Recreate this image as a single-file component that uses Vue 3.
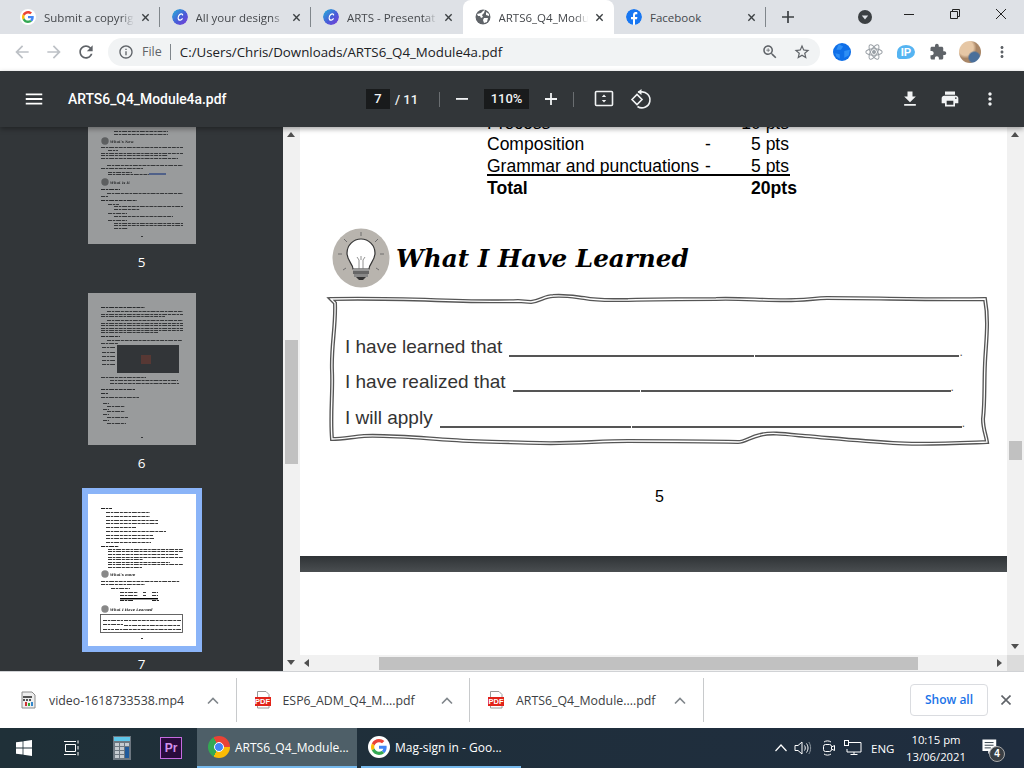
<script setup>
const tabs = [
  { title: 'Submit a copyrig', icon: 'g' },
  { title: 'All your designs', icon: 'c' },
  { title: 'ARTS - Presentat', icon: 'c' },
  { title: 'ARTS6_Q4_Modu', icon: 'globe', active: true },
  { title: 'Facebook', icon: 'f' }
]

const downloads = [
  { name: 'video-1618733538.mp4', video: true },
  { name: 'ESP6_ADM_Q4_M....pdf' },
  { name: 'ARTS6_Q4_Module....pdf' }
]

const scores = [
  { label: 'Process', dash: '-', pts: '10 pts' },
  { label: 'Composition', dash: '-', pts: '5 pts' },
  { label: 'Grammar and punctuations', dash: '-', pts: '5 pts' }
]

const sentences = [
  { text: 'I have learned that', a: 245, b: 204 },
  { text: 'I have realized that', a: 127, b: 310 },
  { text: 'I will apply', a: 191, b: 330 }
]

// thumbnail text lines: x, y, width, height
const bars = (list) => list.map(([x, y, w, h]) => ({ x, y: y + 0.5, w, h: h || 0.9 }))

const thumbs = [
  {
    n: 5,
    lines: bars([[26, 39, 54], [26, 42, 54], [13, 55, 82], [20, 58, 10], [13, 61, 82], [13, 63, 67], [13, 66, 77],
      [19, 73, 76], [13, 76, 42], [20, 80, 24], [20, 82, 41], [13, 97, 19, 1.2], [19, 101, 76], [13, 104, 7],
      [13, 108, 36, 1.2], [20, 112, 11], [26, 114, 69], [26, 117, 26], [20, 121, 19], [26, 124, 59], [20, 128, 19],
      [26, 131, 69], [26, 133, 69], [26, 136, 14], [53, 144, 2]]),
    links: [[61, 82, 17]],
    heads: [{ y: 49, text: "What's New" }, { y: 90, text: 'What is It' }]
  },
  {
    n: 6,
    lines: bars([[13, 14, 44, 1.2], [19, 18, 76], [13, 21, 82], [13, 23, 64], [19, 27, 76], [13, 30, 82], [13, 32, 82],
      [13, 35, 82], [13, 37, 82], [13, 39, 57], [13, 43, 19, 1.2], [19, 47, 75], [13, 50, 17], [14, 54, 13], [14, 59, 13],
      [14, 63, 13], [14, 67, 13], [14, 71, 13], [13, 84, 45], [22, 87, 68], [22, 90, 69], [13, 96, 34, 1.2],
      [13, 100, 7, 1.2], [13, 104, 38], [15, 110, 6], [19, 113, 18], [15, 116, 6], [19, 118, 18], [15, 121, 6],
      [19, 124, 21], [15, 127, 6], [19, 130, 19], [53, 144, 2]]),
    picture: true,
    heads: []
  },
  {
    n: 7,
    selected: true,
    lines: bars([[13, 14, 11, 1.2], [18, 18, 44], [18, 22, 44], [18, 26, 52], [18, 29, 52], [18, 33, 30], [18, 37, 60],
      [18, 41, 47], [18, 44, 48], [18, 48, 45], [13, 52, 18, 1.2], [20, 55, 75], [20, 57, 75], [20, 60, 70], [20, 63, 75],
      [20, 65, 35], [20, 68, 62], [20, 70, 75], [20, 73, 34], [13, 87, 79], [13, 90, 44], [23, 94, 19], [32, 98, 18],
      [55, 98, 3], [64, 98, 6], [32, 101, 18], [55, 101, 3], [64, 101, 6], [32, 104, 18],
      [32, 106, 13, 1.2], [64, 106, 7, 1.2], [15, 126, 20], [36, 126, 57], [15, 130, 20], [36, 131, 56], [15, 135, 11],
      [27, 135, 66], [53, 144, 2]]),
    rule: true,
    heads: [{ y: 80, text: "What's more" }, { y: 115, text: 'What I Have Learned' }],
    box: true
  }
]

const framePath = 'M331 298 C400 296 470 302 518 300 L531 301 C540 300 545 295 553 295 C565 294 575 296 584 297 C600 300 610 299 628 299 C660 298 690 298 716 298 C740 297 770 300 796 299 C810 299 815 297 827 297 C880 297 930 299 985 298 C989 320 986 340 985 362 C984 385 985 400 983 418 C983 428 986 434 987 441 C960 442 920 444 893 442 C860 440 830 437 805 435 C785 433 770 431 760 434 C750 436 745 441 738 441 C700 440 665 440 628 440 C600 440 570 443 540 442 C510 441 480 441 452 439 C420 437 390 434 364 435 C352 436 342 438 332 438 C330 415 333 390 332 370 C331 345 336 325 335 302 Z'
</script>

<template>
<div class="screen">
  <svg class="defs" width="0" height="0">
    <symbol id="g-logo" viewBox="0 0 48 48">
      <path fill="#EA4335" d="M24 9.5c3.54 0 6.71 1.22 9.21 3.6l6.85-6.85C35.9 2.38 30.47 0 24 0 14.62 0 6.51 5.38 2.56 13.22l7.98 6.19C12.43 13.72 17.74 9.5 24 9.5z"/>
      <path fill="#4285F4" d="M46.98 24.55c0-1.57-.15-3.09-.38-4.55H24v9.02h12.94c-.58 2.96-2.26 5.48-4.78 7.18l7.73 6c4.51-4.18 7.09-10.36 7.09-17.65z"/>
      <path fill="#FBBC05" d="M10.53 28.59c-.48-1.45-.76-2.99-.76-4.59s.27-3.14.76-4.59l-7.98-6.19C.92 16.46 0 20.12 0 24c0 3.88.92 7.54 2.56 10.78l7.97-6.19z"/>
      <path fill="#34A853" d="M24 48c6.48 0 11.93-2.13 15.89-5.81l-7.73-6c-2.15 1.45-4.92 2.3-8.16 2.3-6.26 0-11.57-4.22-13.47-9.91l-7.98 6.19C6.51 42.62 14.62 48 24 48z"/>
    </symbol>
    <symbol id="pdf-file" viewBox="0 0 18 18">
      <path d="M3.5 .5H12L15 3.5V17H3.5Z" fill="#fff" stroke="#9a9a9a"/>
    </symbol>
  </svg>

  <!-- tab strip -->
  <div class="tabstrip">
    <div v-for="(t, i) in tabs" :key="i" class="tab" :class="{ active: t.active, nosep: t.active || tabs[i + 1]?.active }">
      <span v-if="t.icon === 'g'" class="fav g-wrap"><svg width="12" height="12"><use href="#g-logo"/></svg></span>
      <svg v-else-if="t.icon === 'c'" class="fav" viewBox="0 0 16 16">
        <defs><linearGradient id="canva-grad" x1="0" y1="0" x2="1" y2="1"><stop offset="0" stop-color="#23b4d8"/><stop offset=".55" stop-color="#4a5bd8"/><stop offset="1" stop-color="#7c3cd6"/></linearGradient></defs>
        <circle cx="8" cy="8" r="8" fill="url(#canva-grad)"/>
        <path d="M10.600 5.800C10.300 4.600 8.900 4.500 7.800 5.500 6.300 6.900 5.800 9.300 6.600 10.500 7.400 11.600 9 11.200 10.200 9.800" fill="none" stroke="#fff" stroke-width="1.300" stroke-linecap="round"/>
      </svg>
      <svg v-else-if="t.icon === 'globe'" class="fav" viewBox="0 0 16 16"><circle cx="8" cy="8" r="7.5" fill="#5f6368"/><path d="M2 5 L6 4 L8 2 L10 1 L9 4 L7 6 L8 8 L6 9 L5 7 L3 7Z M9 9 L13 9 L12 13 L9 14 L8 11Z M11 3 L14 5 L14 7 L11 6Z" fill="#fff"/></svg>
      <svg v-else class="fav" viewBox="0 0 16 16"><circle cx="8" cy="8" r="8" fill="#1877f2"/><path d="M11 10.3l.4-2.3H9V6.5c0-.7.3-1.2 1.3-1.2h1V3.3s-.9-.2-1.8-.2C8.300 3.100 7 4.200 7 6.200V8H5v2.300h2V16h2v-5.700z" fill="#fff"/></svg>
      <span class="tab-title" :class="{ short: t.icon === 'f' }">{{ t.title }}</span>
      <svg class="tab-close" viewBox="0 0 10 10"><path d="M1.500 1.500l7 7M8.500 1.500l-7 7" stroke="#3c4043" stroke-width="1.500"/></svg>
    </div>
    <svg class="newtab" viewBox="0 0 12 12"><path d="M6 0v12M0 6h12" stroke="#3c4043" stroke-width="1.700"/></svg>
    <svg class="profile-drop" viewBox="0 0 16 16"><circle cx="8" cy="8" r="7" fill="#3c4043"/><path d="M4.800 6.500h6.400L8 10.500z" fill="#dee1e6"/></svg>
    <div class="winbtns">
      <svg viewBox="0 0 10 10"><path d="M0 5.500h10" stroke="#222" stroke-width="1"/></svg>
      <svg viewBox="0 0 10 10" fill="none" stroke="#222"><path d="M.5 2.500h7v7h-7zM2.500 2.500v-2h7v7h-2"/></svg>
      <svg viewBox="0 0 10 10"><path d="M0 0l10 10M10 0L0 10" stroke="#222" stroke-width="1"/></svg>
    </div>
  </div>

  <!-- address bar -->
  <div class="toolbar">
    <svg class="navbtn" viewBox="0 0 24 24"><path fill="#bdc1c6" d="M20 11H7.830l5.590-5.590L12 4l-8 8 8 8 1.410-1.410L7.830 13H20v-2z"/></svg>
    <svg class="navbtn" viewBox="0 0 24 24"><path fill="#bdc1c6" d="M12 4l-1.410 1.410L16.170 11H4v2h12.170l-5.580 5.590L12 20l8-8z"/></svg>
    <svg class="navbtn" viewBox="0 0 24 24"><path fill="#5f6368" d="M17.650 6.350C16.200 4.900 14.210 4 12 4c-4.420 0-7.990 3.580-7.990 8s3.570 8 7.990 8c3.730 0 6.840-2.550 7.730-6h-2.080c-.82 2.330-3.040 4-5.650 4-3.310 0-6-2.690-6-6s2.690-6 6-6c1.660 0 3.140.69 4.220 1.780L13 11h7V4l-2.350 2.350z"/></svg>
    <div class="omnibox">
      <svg class="info" viewBox="0 0 24 24"><path fill="#5f6368" d="M11 7h2v2h-2zm0 4h2v6h-2zm1-9C6.480 2 2 6.480 2 12s4.480 10 10 10 10-4.480 10-10S17.520 2 12 2zm0 18c-4.410 0-8-3.590-8-8s3.590-8 8-8 8 3.590 8 8-3.590 8-8 8z"/></svg>
      <span class="scheme">File</span>
      <span class="url">C:/Users/Chris/Downloads/ARTS6_Q4_Module4a.pdf</span>
      <svg class="omni-ic zoom-ic" viewBox="0 0 24 24"><path fill="#5f6368" d="M15.500 14h-.79l-.28-.27C15.410 12.590 16 11.110 16 9.500 16 5.910 13.090 3 9.500 3S3 5.910 3 9.500 5.910 16 9.500 16c1.610 0 3.090-.59 4.230-1.570l.27.28v.79l5 4.990L20.490 19l-4.990-5zm-6 0C7.010 14 5 11.990 5 9.500S7.010 5 9.500 5 14 7.010 14 9.500 11.990 14 9.500 14z"/><path fill="#5f6368" d="M12 10h-2v2H9v-2H7V9h2V7h1v2h2v1z"/></svg>
      <svg class="omni-ic" viewBox="0 0 24 24"><path fill="#5f6368" d="M22 9.240l-7.190-.62L12 2 9.190 8.630 2 9.240l5.460 4.730L5.820 21 12 17.270 18.180 21l-1.630-7.030L22 9.240zM12 15.400l-3.760 2.270 1-4.280-3.320-2.880 4.380-.38L12 6.100l1.710 4.040 4.380.38-3.320 2.880 1 4.280L12 15.400z"/></svg>
    </div>
    <div class="exts">
      <svg viewBox="0 0 16 16"><circle cx="8" cy="8" r="8" fill="#0f6fe8"/><path d="M5 1 L9 3 L7 6 L3 6Z M10 7 L15 6 L14 11 L10 13Z M2 9 L6 10 L6 14 L3 12Z" fill="#2f8ff5"/></svg>
      <svg viewBox="0 0 16 16" fill="none" stroke="#9aa0a6" stroke-width=".9"><ellipse cx="8" cy="8" rx="7.300" ry="2.900"/><ellipse cx="8" cy="8" rx="7.300" ry="2.900" transform="rotate(60 8 8)"/><ellipse cx="8" cy="8" rx="7.300" ry="2.900" transform="rotate(120 8 8)"/><circle cx="8" cy="8" r="1.300" fill="#9aa0a6"/></svg>
      <span class="ip-ext">IP</span>
      <svg viewBox="0 0 24 24"><path fill="#5f6368" d="M20.500 11H19V7c0-1.100-.9-2-2-2h-4V3.500C13 2.120 11.880 1 10.500 1S8 2.120 8 3.500V5H4c-1.100 0-1.990.9-1.990 2v3.800H3.500c1.490 0 2.700 1.210 2.700 2.700s-1.210 2.700-2.700 2.700H2V20c0 1.100.9 2 2 2h3.800v-1.500c0-1.490 1.210-2.700 2.700-2.700 1.490 0 2.700 1.210 2.700 2.700V22H17c1.100 0 2-.9 2-2v-4h1.500c1.380 0 2.500-1.120 2.500-2.500S21.880 11 20.500 11z"/></svg>
      <span class="avatar"></span>
      <svg viewBox="0 0 24 24"><path fill="#5f6368" d="M12 8c1.100 0 2-.9 2-2s-.9-2-2-2-2 .9-2 2 .9 2 2 2zm0 2c-1.100 0-2 .9-2 2s.9 2 2 2 2-.9 2-2-.9-2-2-2zm0 6c-1.100 0-2 .9-2 2s.9 2 2 2 2-.9 2-2-.9-2-2-2z"/></svg>
    </div>
  </div>

  <!-- pdf viewer toolbar -->
  <div class="pdfbar">
    <div class="pdf-left">
      <svg class="pdf-ic" viewBox="0 0 24 24"><path fill="#fff" d="M3 18h18v-2H3v2zm0-5h18v-2H3v2zm0-7v2h18V6H3z"/></svg>
      <span class="pdf-title">ARTS6_Q4_Module4a.pdf</span>
    </div>
    <span class="pagebox">7</span>
    <span class="pagecount">/ 11</span>
    <span class="pdf-sep"></span>
    <svg class="pdf-ic zoom-btn" viewBox="0 0 24 24"><path fill="#f1f3f4" d="M6 11h12v1.800H6z"/></svg>
    <span class="zoombox">110%</span>
    <svg class="pdf-ic zoom-btn" viewBox="0 0 24 24"><path fill="#f1f3f4" d="M11.100 6h1.800v5.100H18v1.800h-5.100V18h-1.800v-5.100H6v-1.800h5.100z"/></svg>
    <span class="pdf-sep sep2"></span>
    <svg class="pdf-ic fit" viewBox="0 0 24 24" fill="none"><rect x="3.500" y="4.500" width="17" height="14" rx="1" stroke="#f1f3f4" stroke-width="1.600"/><path d="M12 7.500l2.200 2.500H9.800zM12 15.500l2.200-2.500H9.800z" fill="#f1f3f4"/></svg>
    <svg class="pdf-ic rot" viewBox="0 0 24 24" fill="none"><path d="M4 12.500l5-5 5 5-5 5z" stroke="#f1f3f4" stroke-width="1.600"/><path d="M10 5h2.500a8 8 0 1 1-3 14.500" stroke="#f1f3f4" stroke-width="1.600"/><path d="M13.500 2v6l-4-3z" fill="#f1f3f4"/></svg>
    <svg class="pdf-ic right-ic dl" viewBox="0 0 24 24"><path fill="#f1f3f4" d="M19 9h-4V3H9v6H5l7 7 7-7zM5 18v2h14v-2H5z"/></svg>
    <svg class="pdf-ic right-ic print" viewBox="0 0 24 24"><path fill="#f1f3f4" d="M19 8H5c-1.660 0-3 1.340-3 3v6h4v4h12v-4h4v-6c0-1.660-1.340-3-3-3zm-3 11H8v-5h8v5zm3-7c-.55 0-1-.45-1-1s.45-1 1-1 1 .45 1 1-.45 1-1 1zm-1-9H6v4h12V3z"/></svg>
    <svg class="pdf-ic right-ic print" viewBox="0 0 24 24"><path fill="#f1f3f4" d="M12 8c1.100 0 2-.9 2-2s-.9-2-2-2-2 .9-2 2 .9 2 2 2zm0 2c-1.100 0-2 .9-2 2s.9 2 2 2 2-.9 2-2-.9-2-2-2zm0 6c-1.100 0-2 .9-2 2s.9 2 2 2 2-.9 2-2-.9-2-2-2z"/></svg>
  </div>

  <div class="main">
    <!-- thumbnails -->
    <div class="sidebar">
      <div class="thumbs">
        <div v-for="p in thumbs" :key="p.n" class="thumb" :class="{ selected: p.selected }">
          <div class="thumb-page">
            <svg class="thumb-ink" viewBox="0 0 108 152">
              <line v-for="(l, i) in p.lines" :key="i" :x1="l.x" :y1="l.y" :x2="l.x + l.w" :y2="l.y" :stroke-width="l.h" stroke="#222" stroke-dasharray="4 .8 2.500 .8 5 .8 3 .8"/>
              <line v-for="(l, i) in p.links || []" :key="i" :x1="l[0]" :y1="l[1]" :x2="l[0] + l[2]" :y2="l[1]" stroke-width="1.200" stroke="#0f3fc0"/>
              <g v-for="h in p.heads" :key="h.y">
                <circle cx="17" :cy="h.y" r="3.700" fill="#888"/>
                <text x="22" :y="h.y + 1.500" class="thumb-head">{{ h.text }}</text>
              </g>
              <g v-if="p.picture">
                <rect x="29" y="52" width="62" height="28" fill="#333538"/>
                <rect x="53" y="62" width="10" height="9" fill="#7c3a30"/>
              </g>
              <rect v-if="p.rule" x="32" y="104" width="38" height="1.400" fill="#000"/>
              <rect v-if="p.box" x="12.500" y="120.500" width="82" height="18" fill="none" stroke="#555" stroke-width=".9"/>
            </svg>
          </div>
          <div class="thumb-num">{{ p.n }}</div>
        </div>
      </div>
    </div>
    <div class="vscroll">
      <span class="arrow up"></span>
      <div class="track"><div class="bar side-bar"></div></div>
      <span class="arrow down"></span>
    </div>

    <!-- page view -->
    <div class="viewer">
      <div class="view-row">
        <div class="doc">
          <div class="page">
            <div class="scores">
              <template v-for="s in scores" :key="s.label">
                <span>{{ s.label }}</span><span>{{ s.dash }}</span><span class="pts">{{ s.pts }}</span>
              </template>
              <div class="rule"></div>
              <b>Total</b><b></b><b>20pts</b>
            </div>
            <div class="learned">
              <svg class="bulb" viewBox="0 0 58 60">
                <ellipse cx="29" cy="30" rx="28.500" ry="29.500" fill="#b8b4ae"/>
                <path d="M21 41c0-5-6-8-6-16a14 14 0 0 1 28 0c0 8-6 11-6 16z" fill="#fff" stroke="#333" stroke-width="1.200"/>
                <path d="M27 41v-9l-2-3M31 41v-9l2-3M29 32v-4" fill="none" stroke="#777" stroke-width=".8"/>
                <path d="M21 41h16v2H21z" fill="#999"/><path d="M21 43h16v3H21z" fill="#666"/><path d="M22 46h14v3H22z" fill="#888"/><path d="M24 49h10l-3 3h-4z" fill="#333"/>
                <path d="M29 4v4M12 11l3 3M46 11l-3 3M6 26h4M48 26h4M11 42l3-2M47 42l-3-2" stroke="#666" stroke-width=".9"/>
              </svg>
              <span class="learned-title">What I Have Learned</span>
            </div>
            <div class="frame">
              <svg class="frame-line" viewBox="325 290 667 156" fill="none">
                <path :d="framePath" stroke="#555" stroke-width="4"/>
                <path :d="framePath" stroke="#fff" stroke-width="1.300"/>
              </svg>
              <div v-for="s in sentences" :key="s.text" class="sentence">
                <span>{{ s.text }}</span>
                <i class="blank" :style="{ width: s.a + 'px' }"></i>
                <i class="blank" :style="{ width: s.b + 'px' }"></i>
                <span class="dot">.</span>
              </div>
            </div>
            <div class="pageno">5</div>
          </div>
          <div class="pagegap"></div>
        </div>
        <div class="vscroll right">
          <span class="arrow up"></span>
          <div class="track"><div class="bar main-bar"></div></div>
          <span class="arrow down"></span>
        </div>
      </div>
      <div class="hscroll">
        <span class="arrow left"></span>
        <div class="htrack"><div class="hbar"></div></div>
        <span class="arrow right-a"></span>
        <span class="corner"></span>
      </div>
    </div>
  </div>

  <!-- downloads shelf -->
  <div class="shelf">
    <div v-for="d in downloads" :key="d.name" class="dl-item">
      <svg v-if="d.video" class="dl-icon" viewBox="0 0 18 18">
        <path d="M2 1H12L15 4V17H2Z" fill="#eee" stroke="#8a8a8a"/>
        <path d="M3 5h9v2H3zM3 8h2v2H3zM6 8h2v2H6zM9 8h2v2H9z" fill="#555"/>
        <path d="M5 11h2v4H5z" fill="#c33"/><path d="M8 12h2v3H8z" fill="#3a3"/><path d="M11 11h2v4h-2z" fill="#38c"/>
      </svg>
      <span v-else class="pdf-badge">
        <svg class="dl-doc" viewBox="0 0 18 18"><use href="#pdf-file"/></svg>
        <span class="pdf-label">PDF</span>
      </span>
      <span class="dl-name">{{ d.name }}</span>
      <svg class="dl-chev" viewBox="0 0 12 8"><path d="M1 6.500l5-5 5 5" fill="none" stroke="#80868b" stroke-width="1.600"/></svg>
    </div>
    <button class="showall">Show all</button>
    <svg class="shelf-x" viewBox="0 0 10 10"><path d="M.5.5l9 9M9.500.5l-9 9" stroke="#5f6368" stroke-width="1.600"/></svg>
  </div>

  <!-- windows taskbar -->
  <div class="taskbar">
    <svg class="tb-win" viewBox="0 0 16 16"><path fill="#fff" d="M0 2.300L6.600 1.400V7.500H0zM7.400 1.300L16 0V7.500H7.400zM0 8.400H6.600V14.600L0 13.700zM7.400 8.400H16V16L7.400 14.700z"/></svg>
    <svg class="tb-view" viewBox="0 0 18 16" fill="none" stroke="#fff"><path d="M2.500 4.500h10v7h-10zM1 1.500h12M1 14.500h12M15 .5v3M15 6v3.500M15 12v3.500" stroke-width="1"/></svg>
    <svg class="tb-calc" viewBox="0 0 18 24"><rect width="18" height="24" fill="#6d7780"/><rect x="1" y="1" width="16" height="4" fill="#5ec7ea"/>
      <path d="M2 7h4v3H2zM7 7h4v3H7zM12 7h4v3h-4zM2 11h4v3H2zM7 11h4v3H7zM2 15h4v3H2zM7 15h4v3H7zM2 19h4v3H2zM7 19h4v3H7z" fill="#c5cbd0"/><path d="M12 11h4v11h-4z" fill="#1f5a9c"/></svg>
    <span class="tb-pr">Pr</span>
    <div class="tb-app current"><span class="chrome"></span><span class="tb-label">ARTS6_Q4_Module...</span></div>
    <div class="tb-app google"><span class="tb-g"><svg width="16" height="16"><use href="#g-logo"/></svg></span><span class="tb-label">Mag-sign in - Goo...</span></div>
    <div class="tray">
      <svg class="tr-chev" viewBox="0 0 12 8"><path d="M.5 7l5.500-6 5.500 6" fill="none" stroke="#fff" stroke-width="1.200"/></svg>
      <svg class="tr-ic speaker" viewBox="0 0 18 16" fill="none" stroke="#fff"><path d="M1 5.500h3L8 2v12L4 10.500H1z"/><path d="M10.500 5.500c1 1.500 1 3.500 0 5M12.500 3.500c2 3 2 6 0 9" /><path d="M14.800 2c2.400 3.500 2.400 8.500 0 12" stroke="#8a949c"/></svg>
      <svg class="tr-ic meet" viewBox="0 0 18 18" fill="none" stroke="#fff"><rect x="3.500" y="5.500" width="8" height="7" rx="2"/><path d="M11.500 8l3-1.500v5l-3-1.500M4 3c2-1.500 5-1.500 7 0M4 15c2 1.500 5 1.500 7 0"/></svg>
      <svg class="tr-ic net" viewBox="0 0 18 16" fill="none" stroke="#fff"><path d="M4.500 2.500h12.500v9.500H3V9M10 12v2.500M6.500 14.500h7"/><rect x=".5" y=".5" width="4" height="5" fill="#1f2d3a"/></svg>
      <span class="tr-lang">ENG</span>
      <div class="tr-clock"><span>10:15 pm</span><span>13/06/2021</span></div>
      <div class="tr-note">
        <svg viewBox="0 0 18 18"><path d="M.5.500h15.500v13H10l-3 3.500v-3.500H.5z" fill="#fff"/><path d="M3 4h10M3 7h10M3 10h7" stroke="#1f2d3a"/></svg>
        <span class="tr-badge">4</span>
      </div>
    </div>
  </div>
</div>
</template>

<style scoped>
.screen {
  display: flex;
  flex-direction: column;
  width: 1024px;
  height: 768px;
  overflow: hidden;
  background: #fff;
  font-family: "Open Sans", "Liberation Sans", sans-serif;
}

.defs {
  position: absolute;
}

/* tab strip */
.tabstrip {
  display: flex;
  align-items: center;
  height: 34px;
  flex: none;
  padding-left: 8px;
  background: #dee1e6;
}

.tab {
  position: relative;
  display: flex;
  align-items: center;
  width: 151.500px;
  height: 34px;
  padding: 0 8px 0 12px;
  box-sizing: border-box;
  color: #45484c;
  font-size: 11.500px;
}

.tab::after {
  content: "";
  position: absolute;
  right: 0;
  top: 7px;
  width: 1px;
  height: 20px;
  background: #80868b;
}

.tab.nosep::after {
  display: none;
}

.tab.active {
  background: #fff;
  border-radius: 8px 8px 0 0;
}

.fav {
  flex: none;
  width: 16px;
  height: 16px;
  border-radius: 50%;
}

.g-wrap {
  display: flex;
  align-items: center;
  justify-content: center;
  background: #fff;
}

.tab-title {
  flex: 1;
  margin: 0 7px 0 8px;
  overflow: hidden;
  white-space: nowrap;
  -webkit-mask-image: linear-gradient(90deg, #000 85%, transparent);
  mask-image: linear-gradient(90deg, #000 85%, transparent);
}

.tab-title.short {
  -webkit-mask-image: none;
  mask-image: none;
}

.tab-close {
  flex: none;
  width: 9px;
  height: 9px;
  margin-right: 2px;
}

.newtab {
  width: 12px;
  height: 12px;
  margin: 0 0 0 16.500px;
}

.profile-drop {
  width: 16px;
  height: 16px;
  margin-left: 63px;
}

.winbtns {
  display: flex;
  gap: 36px;
  margin: -6px 0 0 31px;
}

.winbtns svg {
  width: 10px;
  height: 10px;
}

/* address bar */
.toolbar {
  display: flex;
  align-items: center;
  flex: none;
  height: 37px;
  padding: 0 0 1px 12px;
  box-sizing: border-box;
  background: #fff;
}

.navbtn {
  width: 20px;
  height: 20px;
  margin-right: 12px;
}

.omnibox {
  display: flex;
  align-items: center;
  width: 712px;
  height: 28px;
  padding: 0 9px 0 10px;
  box-sizing: border-box;
  border-radius: 14px;
  background: #f1f3f4;
  font-size: 13.300px;
}

.info {
  width: 16px;
  height: 16px;
}

.scheme {
  margin-left: 8px;
  padding-right: 8px;
  border-right: 1px solid #80868b;
  color: #5f6368;
  font-size: 12.500px;
  line-height: 16px;
}

.url {
  margin-left: 9px;
  color: #202124;
  white-space: nowrap;
}

.omni-ic {
  width: 18px;
  height: 18px;
  margin-left: 14px;
}

.zoom-ic {
  margin-left: auto;
}

.exts {
  display: flex;
  align-items: center;
  margin-left: 13px;
  gap: 14px;
}

.exts svg,
.ip-ext {
  flex: none;
  width: 18px;
  height: 18px;
}

.ip-ext {
  display: flex;
  align-items: center;
  justify-content: center;
  border-radius: 50% 50% 50% 20%;
  height: 14px;
  color: #fff;
  background: #55b4f2;
  font: 700 11px "Liberation Sans", sans-serif;
}

.avatar {
  flex: none;
  width: 22px;
  height: 22px;
  margin: 0 -2px;
  border-radius: 50%;
  background:
    radial-gradient(circle at 70% 75%, #4a6f9a 0 22%, transparent 30%),
    radial-gradient(circle at 30% 30%, #e6c7a5 0 35%, transparent 50%),
    #a98666;
}

/* pdf toolbar */
.pdfbar {
  position: relative;
  z-index: 2;
  display: flex;
  align-items: center;
  flex: none;
  height: 56px;
  padding-right: 24px;
  background: #323639;
  box-shadow: 0 2px 5px rgba(0, 0, 0, .35);
  color: #f1f3f4;
  font-family: Roboto, sans-serif;
}

.pdf-left {
  display: flex;
  align-items: center;
  width: 366px;
  padding-left: 23px;
  box-sizing: border-box;
}

.pdf-ic {
  flex: none;
  width: 24px;
  height: 24px;
}

.pdf-left .pdf-ic {
  width: 22px;
  height: 22px;
}

.right-ic {
  width: 20px;
  height: 20px;
}

.pdf-title {
  margin-left: 23px;
  font-size: 13.900px;
  font-weight: 500;
  color: #fff;
}

.pagebox {
  width: 24px;
  height: 20px;
  background: #191b1c;
  font-size: 13px;
  font-weight: 500;
  line-height: 20px;
  text-align: center;
}

.pagecount {
  width: 27px;
  margin-left: 5px;
  font-size: 13px;
  font-weight: 500;
  white-space: nowrap;
}

.pdf-sep {
  width: 1px;
  height: 15px;
  margin-left: 17px;
  background: #6a6e71;
}

.sep2 {
  margin-left: 10px;
}

.zoom-btn {
  margin-left: 10px;
}

.zoombox {
  width: 45px;
  height: 20px;
  margin-left: 10px;
  background: #191b1c;
  font-size: 13px;
  font-weight: 500;
  line-height: 20px;
  text-align: center;
}

.fit {
  margin-left: 18px;
}

.rot {
  margin-left: 12px;
}

.dl {
  margin-left: auto;
}

.print {
  margin-left: 20px;
}

/* main */
.main {
  display: flex;
  flex: 1;
  min-height: 0;
}

.sidebar {
  width: 283px;
  flex: none;
  overflow: hidden;
  background: #323639;
}

.thumbs {
  margin-top: -35px;
}

.thumb {
  display: flex;
  flex-direction: column;
  align-items: center;
  height: 201px;
}

.thumb-page {
  flex: none;
  width: 108px;
  height: 152px;
  background: #fff;
  opacity: .5;
}

.thumb.selected .thumb-page {
  opacity: 1;
  outline: 6px solid #8ab4f8;
}

.thumb-ink {
  display: block;
  width: 108px;
  height: 152px;
  filter: blur(.55px);
}

.thumb-head {
  font: italic 700 3.600px "DejaVu Serif", serif;
  fill: #111;
}

.thumb-num {
  margin-top: 11px;
  color: #fff;
  font-size: 13.500px;
  line-height: 14px;
}

.vscroll {
  display: flex;
  flex-direction: column;
  flex: none;
  width: 17px;
  background: #f1f1f1;
}

.arrow {
  position: relative;
  flex: none;
  height: 17px;
}

.arrow::before {
  content: "";
  position: absolute;
  width: 0;
  height: 0;
  border: 4px solid transparent;
}

.arrow.up::before {
  left: 4px;
  top: 1px;
  border-bottom: 5px solid #505050;
}

.arrow.down::before {
  left: 4px;
  top: 6px;
  border-top: 5px solid #505050;
}

.track {
  flex: 1;
}

.bar {
  width: 13px;
  margin-left: 2px;
  background: #c1c1c1;
}

.side-bar {
  height: 124px;
  margin-top: 196px;
}

.main-bar {
  height: 19px;
  margin-top: 297px;
}

.viewer {
  display: flex;
  flex-direction: column;
  flex: 1;
  min-width: 0;
}

.view-row {
  display: flex;
  flex: 1;
  min-height: 0;
}

.doc {
  flex: 1;
  min-width: 0;
  overflow: hidden;
  background: #fff;
  font-family: "Liberation Sans", Arial, sans-serif;
  color: #000;
}

.page {
  height: 429px;
  margin-top: -14px;
  padding-top: 14px;
  box-sizing: content-box;
}

.scores {
  display: grid;
  grid-template-columns: 218px 46px 39px;
  width: 303px;
  margin: -14px 0 0 187px;
  font-size: 17.500px;
  line-height: 21.300px;
  white-space: nowrap;
}

.scores b {
  font-size: 17.600px;
  font-weight: 700;
}

.pts {
  justify-self: end;
  margin-right: 1px;
}

.rule {
  grid-column: 1 / -1;
  height: 2px;
  margin: -3px 0 2px;
  background: #000;
}

.learned {
  display: flex;
  align-items: center;
  gap: 6px;
  height: 60px;
  margin: 29px 0 0 32px;
}

.bulb {
  flex: none;
  width: 58px;
  height: 60px;
}

.learned-title {
  font: italic 700 24.700px "DejaVu Serif", serif;
  white-space: nowrap;
}

.frame {
  position: relative;
  width: 667px;
  height: 156px;
  margin: 2.500px 0 0 25px;
  padding: 35.500px 0 0 20px;
  box-sizing: border-box;
}

.frame-line {
  position: absolute;
  left: 0;
  top: 0;
  width: 667px;
  height: 156px;
}

.sentence {
  position: relative;
  display: flex;
  align-items: flex-end;
  height: 35.500px;
  color: #333;
  font-size: 19px;
  line-height: 30px;
}

.blank {
  display: block;
  height: 2px;
  margin: 0 0 5px 0;
  background: #555;
}

.sentence span:first-child {
  margin-right: 7px;
}

.blank + .blank {
  margin-left: 1px;
}

.dot {
  color: #555;
  font-size: 12px;
  line-height: 20px;
}

.pageno {
  margin: 40.500px 0 0 355px;
  font-size: 16px;
  line-height: 20px;
}

.pagegap {
  height: 16px;
  background: linear-gradient(#2f3336, #4a4e51);
}

.hscroll {
  display: flex;
  align-items: center;
  flex: none;
  height: 16px;
  background: #f1f1f1;
}

.arrow.left,
.arrow.right-a {
  width: 16px;
  height: 16px;
}

.arrow.left::before {
  left: 0;
  top: 4px;
  border-right: 5px solid #505050;
}

.arrow.right-a::before {
  left: 6px;
  top: 4px;
  border-left: 5px solid #505050;
}

.htrack {
  flex: 1;
  height: 13px;
}

.hbar {
  width: 539px;
  height: 13px;
  margin-left: 63px;
  background: #c1c1c1;
}

.corner {
  flex: none;
  width: 17px;
  height: 16px;
  background: #dcdcdc;
}

/* downloads */
.shelf {
  display: flex;
  align-items: center;
  flex: none;
  height: 57px;
  padding-left: 3px;
  border-top: 1px solid #d0d2d5;
  box-sizing: border-box;
  background: #fff;
}

.dl-item {
  position: relative;
  display: flex;
  align-items: center;
  flex: none;
  width: 233.500px;
  height: 44px;
  padding-left: 17px;
  box-sizing: border-box;
  border-right: 1px solid #c8cacc;
  color: #3c4043;
  font-size: 12.350px;
}

.dl-icon {
  width: 18px;
  height: 18px;
}

.pdf-badge {
  position: relative;
  width: 18px;
  height: 18px;
}

.dl-doc {
  display: block;
  width: 18px;
  height: 18px;
}

.pdf-label {
  position: absolute;
  left: 1px;
  top: 6px;
  width: 16px;
  height: 9px;
  color: #fff;
  background: #e2231a;
  font: 700 7.500px/9px "Liberation Sans", sans-serif;
  text-align: center;
}

.dl-name {
  margin-left: 11px;
  white-space: nowrap;
}

.dl-chev {
  position: absolute;
  left: 204px;
  top: 19px;
  width: 12px;
  height: 8px;
}

.showall {
  flex: none;
  width: 78px;
  height: 32px;
  margin-left: 206.500px;
  padding: 0 0 2px;
  border: 1px solid #dadce0;
  border-radius: 4px;
  color: #1a73e8;
  background: #fff;
  font: 600 12px "Open Sans", sans-serif;
}

.shelf-x {
  flex: none;
  width: 10px;
  height: 10px;
  margin-left: 13px;
}

/* taskbar */
.taskbar {
  display: flex;
  align-items: center;
  flex: none;
  height: 40px;
  background: linear-gradient(90deg, #1f3038, #1f2d3f);
  color: #fff;
  font-size: 12px;
}

.tb-win {
  flex: none;
  width: 16px;
  height: 16px;
  margin-left: 16px;
}

.tb-view {
  flex: none;
  width: 18px;
  height: 16px;
  margin-left: 31px;
}

.tb-calc {
  flex: none;
  width: 18px;
  height: 24px;
  margin-left: 32px;
}

.tb-pr {
  flex: none;
  width: 22px;
  height: 22px;
  margin-left: 29px;
  border: 1px solid #c66be0;
  box-sizing: border-box;
  color: #d291ec;
  background: #2a0b3d;
  font: 700 12px/20px "Liberation Sans", sans-serif;
  text-align: center;
}

.tb-app {
  display: flex;
  align-items: center;
  flex: none;
  width: 160px;
  height: 40px;
  margin-left: 4px;
  padding-left: 11px;
  box-sizing: border-box;
  border-bottom: 2px solid #76b9ed;
}

.tb-app.current {
  margin-left: 15px;
  padding-left: 11px;
  background: #4e5f68;
}

.tb-app.google {
  padding-left: 7px;
}

.chrome {
  position: relative;
  flex: none;
  width: 22px;
  height: 22px;
  border-radius: 50%;
  background: conic-gradient(from -30deg, #ea4335 0 120deg, #fbbc05 120deg 240deg, #34a853 240deg 360deg);
}

.chrome::after {
  content: "";
  position: absolute;
  left: 6px;
  top: 6px;
  width: 10px;
  height: 10px;
  box-sizing: border-box;
  border: 1.500px solid #fff;
  border-radius: 50%;
  background: #4285f4;
}

.tb-g {
  display: flex;
  align-items: center;
  justify-content: center;
  flex: none;
  width: 22px;
  height: 22px;
  border-radius: 50%;
  background: #fff;
}

.tb-label {
  margin-left: 5px;
  white-space: nowrap;
}

.tray {
  display: flex;
  align-items: center;
  margin-left: auto;
  padding-right: 26px;
}

.tr-chev {
  width: 12px;
  height: 8px;
}

.tr-ic {
  width: 18px;
  height: 16px;
}

.speaker {
  margin-left: 7px;
}

.meet {
  height: 18px;
  margin-left: 8px;
}

.net {
  margin-left: 6px;
}

.tr-lang {
  width: 22px;
  margin-left: 9px;
  font-size: 11.500px;
}

.tr-clock {
  display: flex;
  flex-direction: column;
  align-items: center;
  width: 62px;
  margin-left: 12px;
  font-size: 11.300px;
  line-height: 17px;
}

.tr-note {
  position: relative;
  width: 16px;
  height: 18px;
  margin-left: 15px;
}

.tr-note svg {
  display: block;
  width: 16px;
  height: 16px;
}

.tr-badge {
  position: absolute;
  left: 7px;
  top: 7px;
  width: 14px;
  height: 14px;
  border: 1px solid #aaa;
  border-radius: 50%;
  background: #3a3f44;
  font: 700 10px/14px "Liberation Sans", sans-serif;
  text-align: center;
}
</style>
